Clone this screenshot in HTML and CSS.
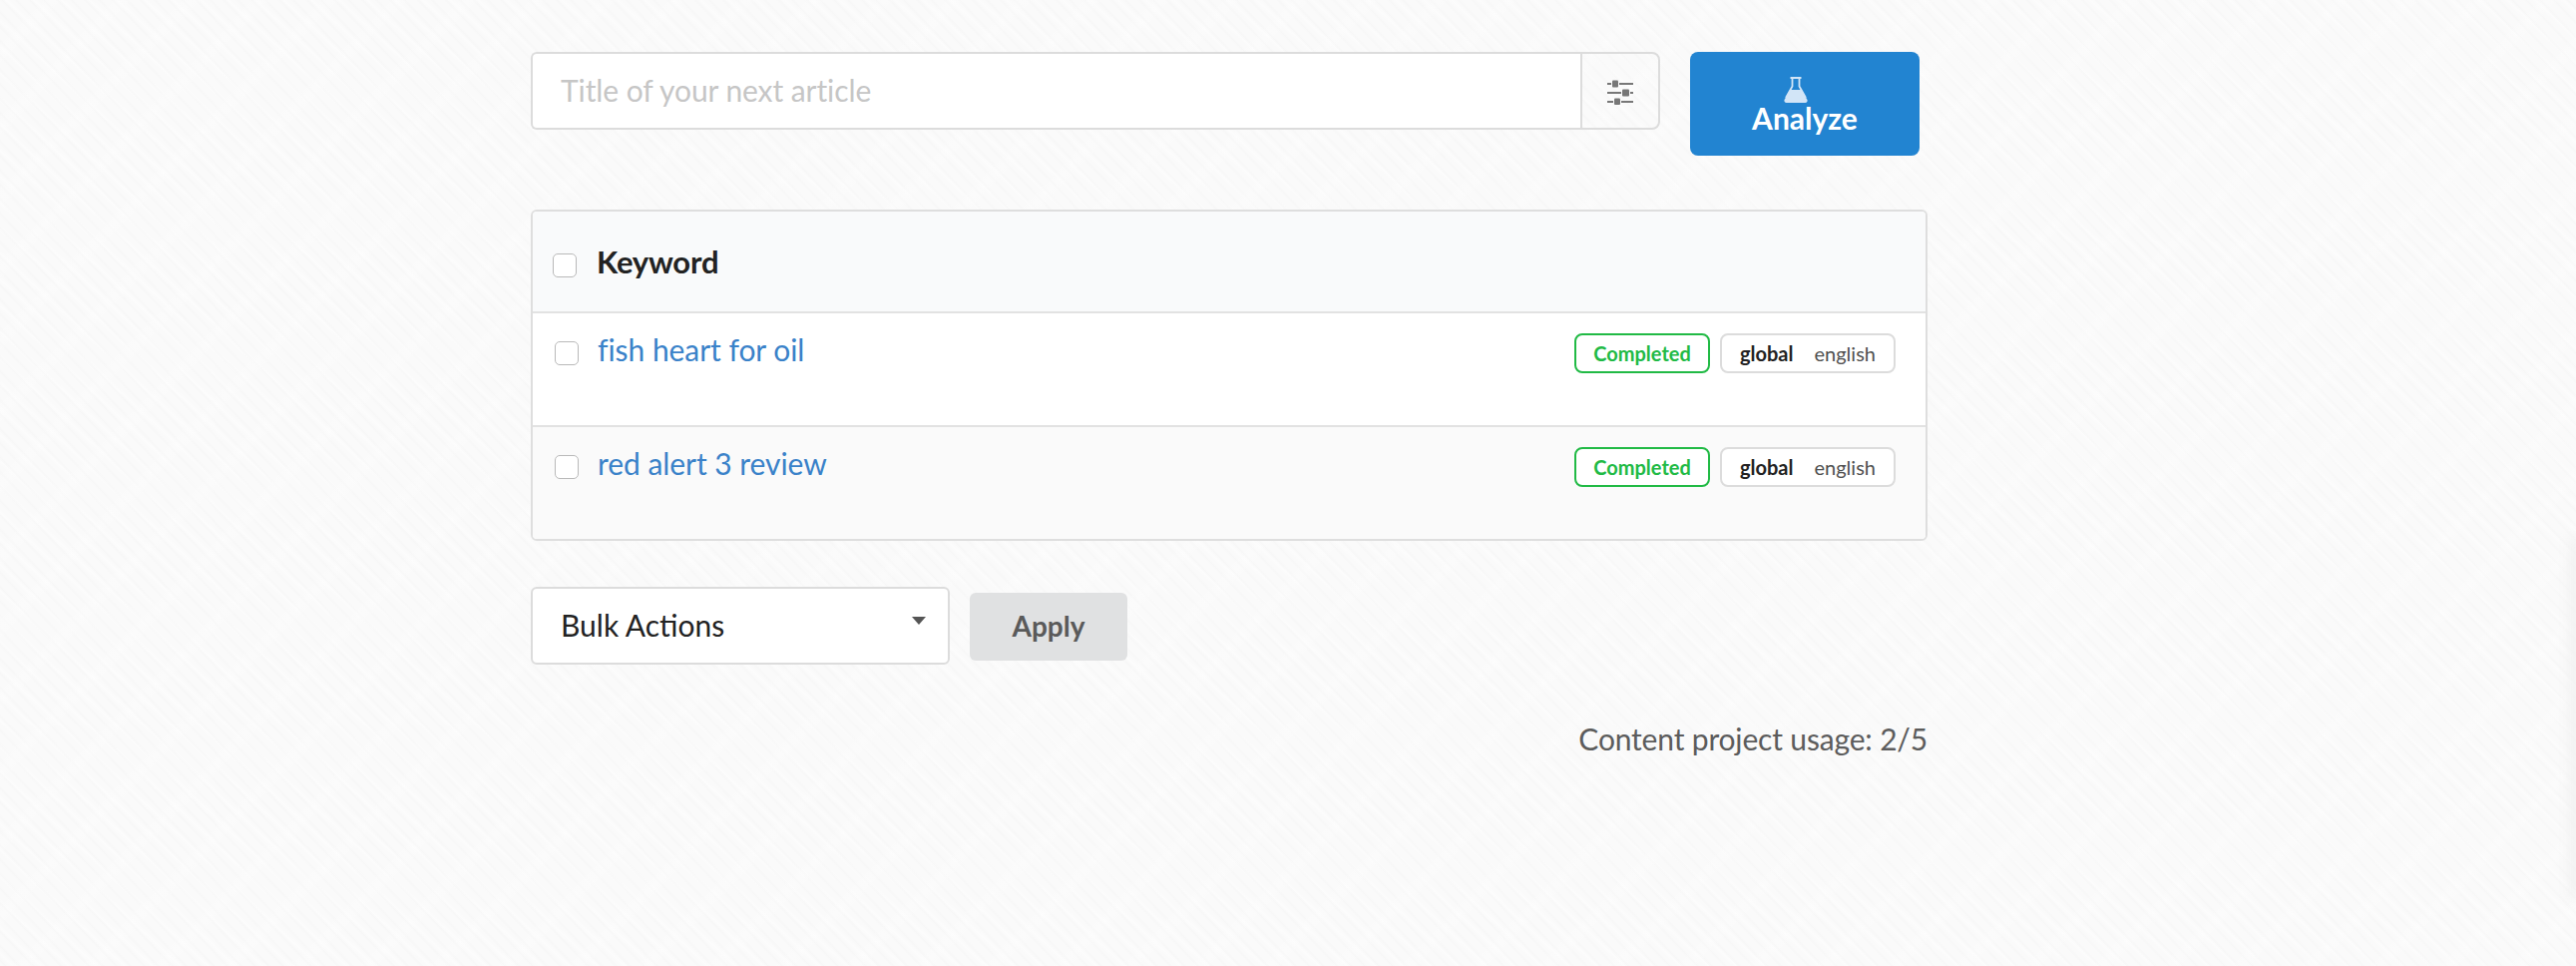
FILE: index.html
```html
<!DOCTYPE html>
<html lang="en">
<head>
<meta charset="utf-8">
<title>Content projects</title>
<link rel="stylesheet" href="styles.css">
</head>
<body>
<main class="page">
  <form class="search-row">
    <div class="input-group">
      <input class="title-input" type="text" placeholder="Title of your next article">
      <button class="settings-btn" type="button" aria-label="Settings">
        <svg class="sliders" width="26" height="25" viewBox="0 0 26 25">
          <g fill="#777">
            <rect x="0" y="3" width="4" height="2"/>
            <rect x="12" y="3" width="14" height="2"/>
            <rect x="0" y="12" width="14" height="2"/>
            <rect x="23" y="12" width="3" height="2"/>
            <rect x="0" y="21" width="6" height="2"/>
            <rect x="14" y="21" width="12" height="2"/>
            <rect x="5" y="0.5" width="6" height="7" rx="1"/>
            <rect x="15" y="9.5" width="7" height="7" rx="1"/>
            <rect x="7" y="18.5" width="6" height="6.5" rx="1"/>
          </g>
        </svg>
      </button>
    </div>
    <button class="analyze-btn" type="button">
      <svg class="flask" width="24" height="26" viewBox="0 0 24 26">
        <path d="M6.500 1h11M8.500 1v8.500L2 21M15.500 1v8.500L22 21" fill="none" stroke="#d2e5f7" stroke-width="1.800"/>
        <path d="M6.500 13h11L23.500 23c.5 1.500-.5 3-2 3h-19c-1.500 0-2.500-1.500-2-3z" fill="#d2e5f7"/>
      </svg>
      <span>Analyze</span>
    </button>
  </form>

  <section class="table">
    <div class="table-head">
      <input class="check check-head" type="checkbox">
      <span class="head-label">Keyword</span>
    </div>
    <div class="row">
      <input class="check check-row" type="checkbox">
      <a class="keyword" href="#">fish heart for oil</a>
      <span class="badge-status">Completed</span>
      <span class="badge-locale"><b>global</b><span>english</span></span>
    </div>
    <div class="row row-alt">
      <input class="check check-row" type="checkbox">
      <a class="keyword" href="#">red alert 3 review</a>
      <span class="badge-status">Completed</span>
      <span class="badge-locale"><b>global</b><span>english</span></span>
    </div>
  </section>

  <div class="bulk-row">
    <div class="select">Bulk Actions<i class="caret"></i></div>
    <button class="apply-btn" type="button">Apply</button>
  </div>

  <p class="usage">Content project usage: 2/5</p>
</main>
<div class="edge-shadow"></div>
</body>
</html>
```
FILE: styles.css
```css
* { box-sizing: border-box; }
html, body { margin: 0; height: 100%; }
body {
  position: relative;
  overflow: hidden;
  font-family: Lato, "Open Sans", sans-serif;
  color: #222;
  background-color: #fafafa;
  background-image:
    repeating-linear-gradient(134deg, rgba(255,255,255,0) 0 26px, rgba(255,255,255,.2) 38px, rgba(255,255,255,0) 50px),
    repeating-linear-gradient(46deg, rgba(244,244,244,0) 0 2px, rgba(244,244,244,.45) 4px, rgba(244,244,244,0) 6px 10px),
    repeating-linear-gradient(43deg, rgba(255,255,255,0) 0 6px, rgba(255,255,255,.4) 9px, rgba(255,255,255,0) 12px 19px);
}
.page { width: 1400px; margin-left: 532px; padding-top: 52px; }

.search-row { display: flex; align-items: flex-start; gap: 30px; }
.input-group { display: flex; width: 1132px; height: 78px; }
.title-input {
  flex: 1;
  min-width: 0;
  height: 78px;
  padding: 0 28px 2px;
  border: 2px solid #dcdcdc;
  border-right: 0;
  border-radius: 6px 0 0 6px;
  background: #fff;
  font: 30px Lato, sans-serif;
  letter-spacing: -0.08px;
  outline: none;
}
.title-input::placeholder { color: #c6c6c6; opacity: 1; }
.settings-btn {
  display: flex;
  align-items: center;
  justify-content: center;
  width: 80px;
  height: 78px;
  padding: 3px 0 0;
  border: 2px solid #dcdcdc;
  border-radius: 0 8px 8px 0;
  background: transparent;
}
.analyze-btn {
  display: flex;
  flex-direction: column;
  align-items: center;
  width: 230px;
  height: 104px;
  padding: 25px 0 0;
  border: 0;
  border-radius: 8px;
  background: #2284d1;
  color: #fff;
  font: 700 30px/31px Lato, sans-serif;
}
.flask { display: block; margin-right: 18px; }

.table {
  margin-top: 54px;
  border: 2px solid #dedede;
  border-radius: 6px;
  overflow: hidden;
  background: #fff;
}
.table-head {
  display: flex;
  align-items: center;
  height: 102px;
  padding: 0 20px;
  background: #f9fafb;
  border-bottom: 2px solid #e2e2e2;
}
.check {
  appearance: none;
  width: 24px;
  height: 24px;
  margin: 0;
  flex: none;
  border: 1.5px solid #b9b9b9;
  border-radius: 5px;
  background: #fff;
}
.check-head { margin-top: 8px; }
.head-label { margin-left: 20px; font-size: 31px; font-weight: 700; letter-spacing: -0.2px; color: #222; }
.row {
  display: flex;
  align-items: flex-start;
  height: 114px;
  padding: 19px 30px 0 22px;
  background: #fff;
  border-bottom: 2px solid #e2e2e2;
}
.row-alt { height: 112px; background: #fafafa; border-bottom: 0; }
.check-row { margin-top: 9px; }
.keyword {
  margin-top: -1px;
  margin-left: 19px;
  margin-right: auto;
  font-size: 30px;
  line-height: 36px;
  letter-spacing: -0.05px;
  color: #3a82c9;
  text-decoration: none;
}
.badge-status, .badge-locale {
  display: flex;
  align-items: center;
  height: 40px;
  margin-top: 1px;
  border-radius: 8px;
  background: #fff;
  font-size: 20px;
}
.badge-status {
  justify-content: center;
  width: 136px;
  border: 2px solid #21ba45;
  color: #21ba45;
  font-weight: 700;
}
.badge-locale {
  width: 176px;
  margin-left: 10px;
  padding-left: 18px;
  border: 2px solid #dcdcdc;
  color: #4f4f4f;
}
.badge-locale b { margin-right: 21px; font-weight: 700; color: #222; }

.bulk-row { display: flex; align-items: flex-start; margin-top: 46px; }
.select {
  position: relative;
  width: 420px;
  height: 78px;
  padding: 0 28px;
  border: 2px solid #dcdcdc;
  border-radius: 6px;
  background: #fff;
  font-size: 30px;
  line-height: 72px;
  color: #222;
}
.caret {
  position: absolute;
  top: 28px;
  right: 22px;
  width: 0;
  height: 0;
  border-left: 7px solid transparent;
  border-right: 7px solid transparent;
  border-top: 8px solid #555;
}
.apply-btn {
  width: 158px;
  height: 68px;
  margin: 6px 0 0 20px;
  padding: 0 0 2px;
  border: 0;
  border-radius: 6px;
  background: #e0e1e2;
  color: #5a5a5a;
  font: 700 28px Lato, sans-serif;
}
.usage {
  margin: 56px 0 0;
  text-align: right;
  font-size: 30px;
  line-height: 36px;
  letter-spacing: -0.17px;
  color: #5c5c5c;
}
.edge-shadow {
  position: absolute;
  top: 540px;
  right: -6px;
  width: 12px;
  height: 360px;
  background: #f0f0f0;
  filter: blur(6px);
}
```
